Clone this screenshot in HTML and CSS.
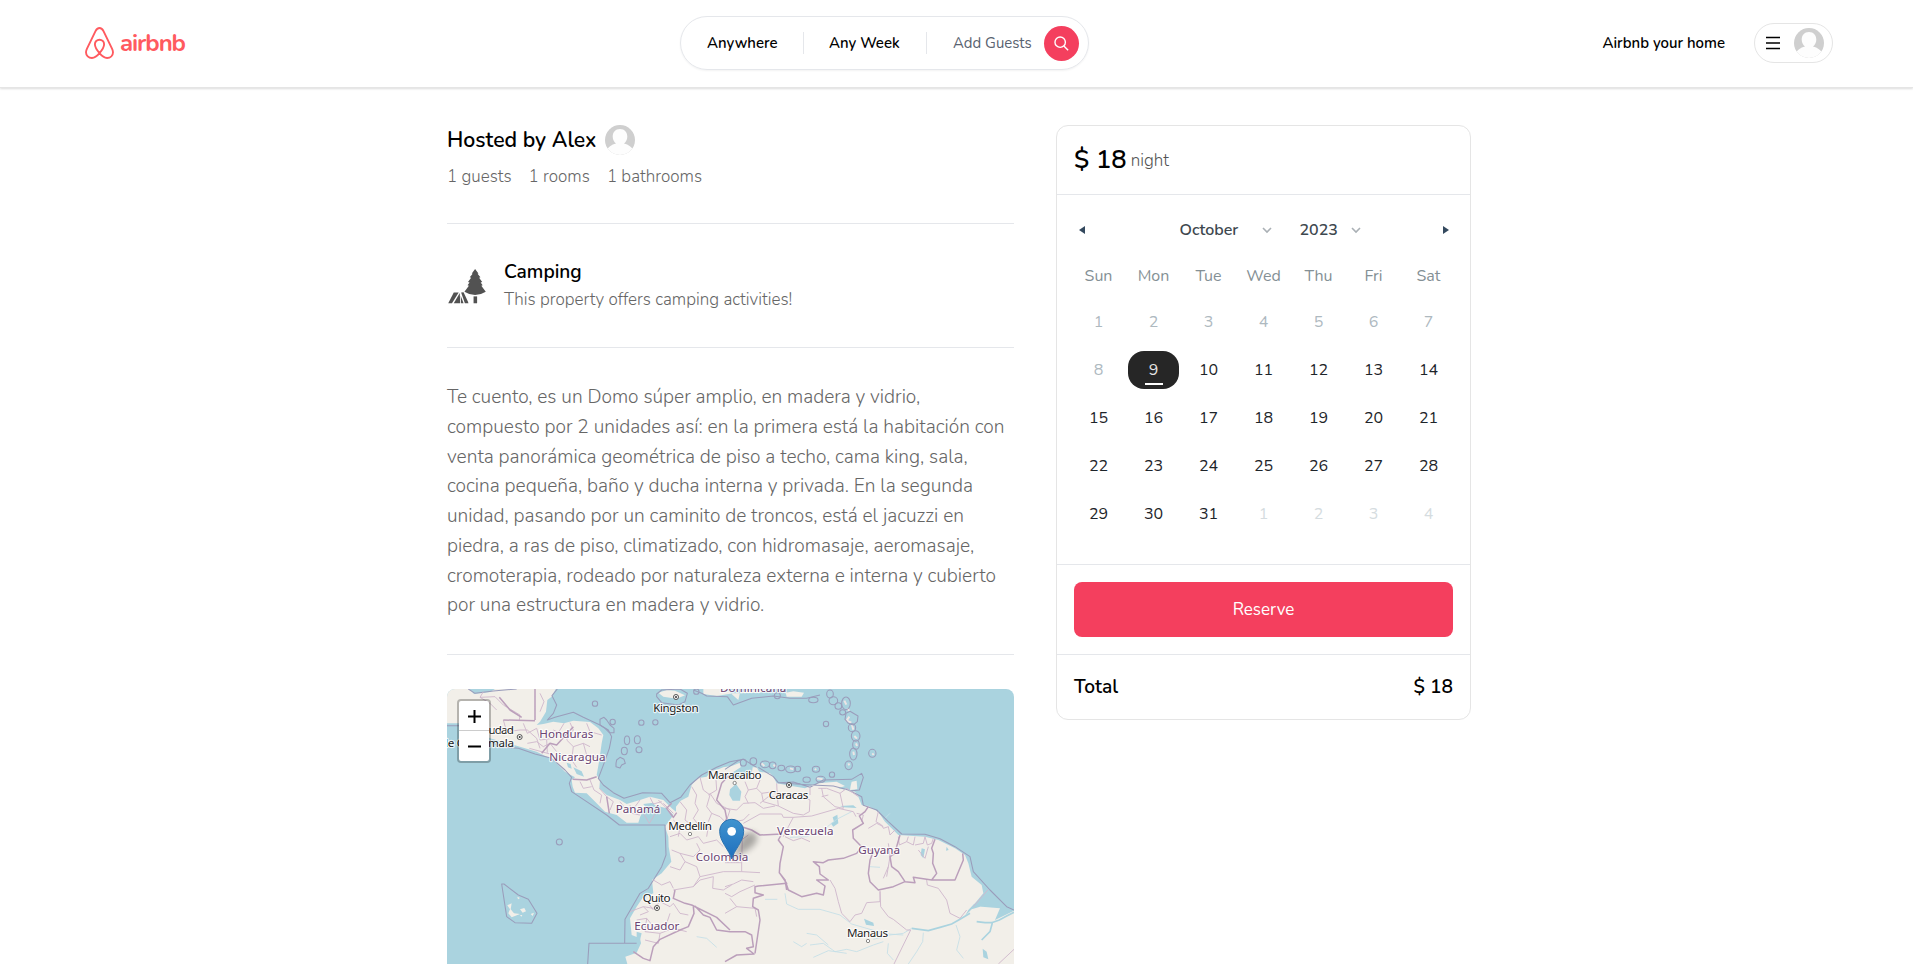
FILE: index.html
```html
<!DOCTYPE html>
<html lang="en">
<head>
<meta charset="utf-8">
<title>Airbnb</title>
<link rel="stylesheet" href="styles.css">
</head>
<body>
<svg class="defs" width="0" height="0">
  <symbol id="avatar" viewBox="0 0 30 30">
    <clipPath id="avatar-clip"><circle cx="15" cy="15" r="15"/></clipPath>
    <g clip-path="url(#avatar-clip)">
      <rect width="30" height="30" fill="#cfcfcf"/>
      <path d="M15 4C19.6 4 22.3 7.300 22.300 11.500C22.300 14.500 21 17 19 18.500C23.500 19.500 27 22 29 26V31H1V26C3 22 6.500 19.500 11 18.500C9 17 7.700 14.500 7.700 11.500C7.700 7.300 10.400 4 15 4Z" fill="#fdfdfd"/>
    </g>
  </symbol>
</svg>

<header class="header">
  <a class="logo">
    <svg class="logo-mark" viewBox="0 0 29 32" width="29" height="32"><path d="M14.500 26.200C11.500 22.700 9.900 19.900 9.900 17.300C9.900 14.500 11.900 12.700 14.500 12.700S19.100 14.500 19.100 17.300C19.100 19.900 17.500 22.700 14.500 26.200C12 29.300 9.600 31 6.900 31C3.600 31 1 28.600 1 25.300C1 24.100 1.300 23.100 2 21.700L10.500 4.100C11.500 2 12.700 1 14.500 1S17.500 2 18.500 4.100L27 21.700C27.700 23.100 28 24.100 28 25.300C28 28.600 25.400 31 22.100 31C19.400 31 17 29.300 14.500 26.200Z" fill="none" stroke="#ff5a5f" stroke-width="1.900"/></svg>
    <span class="logo-text">airbnb</span>
  </a>
  <div class="search">
    <div class="search-item">Anywhere</div>
    <div class="search-item search-week">Any Week</div>
    <div class="search-guests">
      <span>Add Guests</span>
      <span class="search-button"><svg viewBox="0 0 32 32" width="17" height="17"><circle cx="13.500" cy="13.500" r="9.800"/><path d="M20.500 20.500L28.500 28.500"/></svg></span>
    </div>
  </div>
  <div class="user">
    <span class="user-home">Airbnb your home</span>
    <div class="user-menu">
      <svg class="burger" viewBox="0 0 14 14" width="14" height="14"><path d="M0 1.500H14M0 7H14M0 12.500H14"/></svg>
      <svg class="avatar"><use href="#avatar"/></svg>
    </div>
  </div>
</header>

<main class="main">
  <section class="info">
    <div class="host"><span>Hosted by Alex</span><svg class="avatar"><use href="#avatar"/></svg></div>
    <div class="facts"><span>1 guests</span><span>1 rooms</span><span>1 bathrooms</span></div>
    <hr>
    <div class="category">
      <svg viewBox="0 0 180 165" width="40" height="37">
        <g fill="#525252"><path d="M122 4L137 24L133 25L146 41L140 43L154 62L147 64L156 77L150 79L170 106Q146 121 122 121Q98 121 74 106L94 79L88 77L97 64L90 62L104 43L98 41L111 25L107 24Z"/><path d="M115 127H131V158H115Z"/><path d="M26 110H48L18 158H1L4 152Z"/><path d="M53 112L55 158H26Z"/><path d="M59 110L70 108L90 151L92 158H76Z"/><path d="M57 124L70 158H59Z"/></g>
      </svg>
      <div><div class="category-title">Camping</div><div class="category-text">This property offers camping activities!</div></div>
    </div>
    <hr>
    <p class="description">Te cuento, es un Domo súper amplio, en madera y vidrio,<br>compuesto por 2 unidades así: en la primera está la habitación con<br>venta panorámica geométrica de piso a techo, cama king, sala,<br>cocina pequeña, baño y ducha interna y privada. En la segunda<br>unidad, pasando por un caminito de troncos, está el jacuzzi en<br>piedra, a ras de piso, climatizado, con hidromasaje, aeromasaje,<br>cromoterapia, rodeado por naturaleza externa e interna y cubierto<br>por una estructura en madera y vidrio.</p>
    <hr>
    <div class="map">
      <svg class="map-tiles" viewBox="21 27 1701 825" width="567" height="275">
        <defs>
          <linearGradient id="pin" x1="0" y1="0" x2="0" y2="1"><stop offset="0" stop-color="#3f93cf"/><stop offset="1" stop-color="#1f6fbd"/></linearGradient>
          <filter id="soft" x="-50%" y="-50%" width="200%" height="200%"><feGaussianBlur stdDeviation="9"/></filter>
        </defs>
        <rect x="21" y="27" width="1701" height="825" fill="#aad3df"/>
        <!-- mainland -->
        <path class="land" d="M21 27H88L102 42L150 36L165 27H347L335 50L322 60L318 95L300 125L290 135L310 132L340 125L372 130L400 122L450 126L475 145L490 165L485 190L478 240L470 285L480 300L478 325L500 345L540 360L560 372L600 360L630 350L670 360L695 385L708 395L708 380L722 362L745 350L755 315L772 295L800 290L815 272L835 268L850 262L875 258L900 248L902 262L880 276L868 284L875 300L900 296L915 285L935 282L938 262L950 262L958 275L990 280L1000 290L1010 310L1055 318L1095 325L1125 312L1150 308L1190 305L1215 318L1195 325L1245 335L1255 350L1265 375L1285 378L1315 395L1335 425L1375 465L1455 470L1495 480L1545 505L1575 525L1585 550L1595 590L1625 615L1630 640L1605 670L1625 680L1680 685L1665 720L1722 692V852H562L556 830L590 818L603 790L600 775L575 765L570 715L590 680L607 655L640 640L636 600L665 580L694 545L686 500L685 470L675 440L700 405L680 385L640 375L612 385L600 412L595 428L560 428L530 405L495 395L470 370L440 340L405 338L398 320L395 300L405 292L375 275L340 240L290 215L240 200L150 175L90 140L60 130H21Z"/>
        <!-- islands -->
        <path class="land" d="M655 38L680 30L705 32L735 46L710 56L670 50ZM790 27H860L878 45L895 60L900 38L930 30L985 27H990L960 38L880 40L830 48L790 42ZM1037 38L1060 34L1092 38L1085 50L1040 50ZM1232 318L1235 305L1250 302L1252 328L1230 330ZM202 676L215 670L212 688L222 700L240 702L215 712L205 700L210 688ZM240 688L253 684L258 694L248 698ZM232 650L240 654L234 658ZM272 702L282 698L278 708ZM240 705L247 705L244 710Z"/>
        <path class="speck" d="M1213 62l6 12M1222 85l6 8M1228 110l-8 12l14 6M1236 135l4 14M1243 168l8 8M1248 190l3 8M1240 215l2 10M1225 250l3 6M1297 220l4 5M965 250l8 8M1000 255l10 5M1050 265l10 3M1130 295l18 3M1125 266l3 4"/>
        <!-- lakes and rivers -->
        <path class="lake" d="M870 328L888 312L904 335L900 362L878 362L868 345ZM1178 412L1192 404L1195 430L1180 440L1172 430L1182 425ZM400 262L425 274L432 290L410 282ZM380 248L392 252L395 266L384 262ZM1272 716L1300 728L1302 738L1278 734ZM1445 505L1455 508L1450 535L1442 525ZM1520 500L1526 510L1518 512ZM1628 806L1640 815L1645 838L1630 832ZM1602 672L1585 690L1575 708L1595 688L1640 674L1615 664ZM590 755L605 760L600 780L590 778ZM610 372L640 368L655 395L640 382L618 384ZM1200 378L1240 376L1250 384L1210 382Z"/>
        <path class="river wide" d="M1722 697L1700 708L1678 720L1655 728L1635 728L1610 725M1590 700L1560 718L1535 732L1500 742L1465 752L1415 745M1658 725L1650 755L1625 780"/>
        <path class="river" d="M1450 758L1448 785L1430 815L1405 852M1548 735L1560 770L1550 810L1570 835M1415 745L1390 760L1350 765L1300 778M1035 640L1040 672L1075 688L1140 688L1200 705L1235 732L1290 748L1345 762L1390 765M975 658L1012 658M1110 795L1150 790L1185 815L1220 808L1250 815L1300 795L1330 785M1100 760L1130 765L1165 795M1060 785L1085 800L1100 790M1120 832L1165 812L1220 820M1345 790L1342 820L1360 840M1290 560L1320 562M1350 400L1330 420M770 770L800 775L830 802M1235 395L1190 418L1150 450L1100 470L1050 472"/>
        <!-- maritime limits -->
        <path class="sea" d="M21 137L60 137L110 165L180 200L235 205L285 222L335 235L375 270L395 292L388 310L395 335L440 365L500 405L538 435L675 435L678 525L665 560L625 625L600 640L555 718L554 790M443 852L447 790H590M85 27L105 40L160 33L230 27M352 27L336 47L350 75L340 100L322 120L345 112L400 97L430 112L480 135L505 150L515 170L508 205L492 250L475 295L490 315L520 338L552 355L608 338L665 340L690 368L722 352L750 315L785 285L830 262L870 245L910 238L950 262M855 268L895 242L910 238M955 262L1000 290L1015 308L1060 306L1110 322L1150 300L1235 298L1265 280L1270 292L1258 330L1228 333M1015 308L1100 314L1180 318L1225 330L1265 350L1270 376L1310 390L1345 425L1385 462L1455 463L1500 476L1545 500L1590 530L1600 575L1650 630L1700 680L1722 690M185 612L200 710L225 728L275 730L291 700L265 658L235 645L192 612ZM650 42L665 30L720 27L742 40L735 65L715 75L665 68L650 50ZM862 50L880 75L935 55L1000 48L1050 55L1100 55L1140 45M760 30L785 40L800 48L862 50"/>
        <g class="sea">
          <circle cx="465" cy="71" r="8"/><circle cx="518" cy="126" r="8"/><circle cx="604" cy="128" r="8"/><circle cx="646" cy="127" r="8"/><circle cx="358" cy="486" r="9"/><circle cx="544" cy="538" r="8"/><circle cx="769" cy="35" r="8"/><circle cx="1158" cy="132" r="8"/><circle cx="1012" cy="47" r="9"/>
          <ellipse cx="561" cy="181" rx="8" ry="13"/><ellipse cx="592" cy="179" rx="9" ry="12"/><ellipse cx="553" cy="213" rx="9" ry="11"/><ellipse cx="597" cy="209" rx="9" ry="9"/><path d="M530 240L540 232L552 238L556 250L545 255L540 264L528 260L528 250ZM480 118L492 112L500 120L510 135L522 145L522 158L508 158L495 145L480 135Z"/>
          <ellipse cx="1120" cy="60" rx="14" ry="8"/><ellipse cx="1170" cy="42" rx="10" ry="12"/><ellipse cx="1180" cy="62" rx="13" ry="12"/><ellipse cx="1195" cy="78" rx="10" ry="10"/><ellipse cx="1218" cy="70" rx="13" ry="19"/><ellipse cx="1208" cy="97" rx="9" ry="8"/><path d="M1218 100L1230 94L1254 108L1252 125L1240 135L1225 130L1215 118Z"/><ellipse cx="1236" cy="143" rx="11" ry="12"/><ellipse cx="1247" cy="168" rx="13" ry="16"/><ellipse cx="1248" cy="194" rx="10" ry="14"/><ellipse cx="1240" cy="222" rx="11" ry="18"/><ellipse cx="1226" cy="256" rx="11" ry="13"/><ellipse cx="1297" cy="220" rx="11" ry="12"/>
          <ellipse cx="940" cy="244" rx="10" ry="11"/><ellipse cx="910" cy="248" rx="9" ry="10"/><ellipse cx="975" cy="253" rx="14" ry="10"/><ellipse cx="998" cy="256" rx="10" ry="10"/><ellipse cx="1024" cy="264" rx="10" ry="8"/><ellipse cx="1052" cy="268" rx="15" ry="10"/><ellipse cx="1073" cy="267" rx="9" ry="8"/><ellipse cx="1128" cy="268" rx="11" ry="9"/><ellipse cx="1100" cy="299" rx="11" ry="8"/><ellipse cx="1176" cy="284" rx="8" ry="8"/><ellipse cx="1142" cy="298" rx="14" ry="9"/>
        </g>
        <!-- provinces -->
        <path class="province" d="M120 52L165 50L190 75L240 105L238 120M130 35L120 52L150 70L170 90M190 120L200 155L240 150L262 150L290 175M250 130L262 160L290 145L300 180L340 175L360 150L372 130M262 190L290 185L310 200L330 190L350 215M290 175L300 205M320 180L322 218M390 128L400 150L380 180L400 200L430 190L450 200M340 150L375 165L392 150M440 130L450 155L485 165M400 200L395 240L410 262M430 190L440 225L475 235M300 40L312 65L300 95M268 205L330 222M420 305L430 325L455 320M450 300L462 330L485 345L480 370M478 325L500 350L520 365L510 390M540 365L555 385L585 380L600 360M570 375L575 400L600 405M630 352L640 372L665 365M655 360L680 385L690 375M670 370L700 400M610 400L628 430L645 402"/>
        <path class="province" d="M755 320L770 345L765 370L775 390L760 415L780 440L790 425L805 440L800 470M780 292L790 330L810 345L800 380L815 400L805 425M805 345L830 330L828 300M720 365L740 390L735 420L760 440M690 470L720 460L740 480L775 470L790 490L830 480L850 500M700 420L720 440L715 470M695 510L720 520L735 545L720 570L690 560M720 520L760 530L780 510L770 490M735 545L770 560L780 590L760 620L700 630M760 620L780 600L820 590L818 625L850 630L875 615M640 600L665 615L690 605L700 625M780 590L850 575L905 575L905 548L855 548M810 340L830 370L870 390L860 420M815 400L840 410L860 430L850 470M905 575L960 578M905 548L907 470M855 500L890 490L925 465M855 620L880 612L905 600L940 605M855 640L875 650L900 635L945 615M870 655L890 680L855 700M890 680L945 685L950 710M570 695L610 680L625 695L600 705M610 680L640 685L660 665L690 680L700 670M590 720L620 715L640 740L680 730L690 700M620 715L615 755L660 760L655 790L615 780M660 760L700 745L740 755M640 655L625 670L640 690M700 670L720 700L745 705M855 385L890 390L910 370L945 368L970 385L1005 378M915 305L925 330L950 325L965 340L1000 335M950 325L960 300M965 340L970 365L1015 378M1000 335L1015 350L1060 340L1080 345L1110 360L1108 395L1090 405L1060 400L1015 378L1012 350M925 330L915 350L925 370M1110 322L1110 345M1010 310L1012 350M1135 325L1160 325L1200 340L1210 385L1185 380L1150 350L1145 325M1200 340L1220 325L1255 350M1145 350L1165 345M910 430L960 402L1025 402L1030 412L1060 412L1115 408L1195 385L1240 395L1248 410M855 430L910 420L928 402M960 370L985 350L1010 352M1060 412L1045 440L1030 470M1035 470L1060 482L1085 474L1110 485M1250 400L1270 405L1265 425M1285 445L1310 430L1330 440M1315 395L1308 425L1325 435L1330 445L1345 440L1350 465L1365 450M1375 470L1378 495L1400 485L1405 470M1400 485L1420 495L1425 470M1425 495L1450 490L1455 470L1462 495L1475 490L1480 475M1435 510L1455 535L1465 500M1170 600L1185 625L1195 665L1205 700L1230 725L1245 705L1265 700L1280 668L1320 665V635M1345 560L1330 595M1345 490L1350 530L1340 590M1320 632L1322 680L1345 710L1360 718L1400 750L1412 750L1362 852M1460 600L1462 615L1495 625L1520 660L1530 700L1560 715L1580 690M1645 628L1600 680M1675 852L1722 808"/>
        <!-- countries -->
        <path class="country" d="M285 27V120M178 52L210 90L245 112M190 120L285 122M695 370L680 385L700 412L710 398M500 350L508 400M470 290L440 300L398 298M400 140L350 195L330 190L305 220M705 630L700 655L735 670L755 675L830 712L870 750M760 680L762 700L745 740L720 750L660 778L640 800L630 842L610 835L580 815M765 678L790 705L810 712L830 750L870 755L915 755L935 765L940 800L920 805L942 822L890 825L855 845M868 285L845 310L830 360L855 390L860 415L855 430L905 440L935 450L960 465L1025 462L1015 480L1030 500L1020 550L1018 578L1035 600L1040 630M1018 578L1040 610L955 618L945 620L945 638L970 645L940 655L938 680L955 690L960 720L945 820M1035 600L1045 630L1085 650L1130 640L1150 645L1155 618L1130 600L1165 600L1140 582L1138 560L1120 545L1150 548L1165 540L1210 535L1250 520L1265 500L1240 475L1238 450L1270 430L1258 408L1275 395L1285 380M1265 500L1300 515L1290 540L1285 580L1290 605L1315 630L1360 620L1395 605M1380 465L1370 500L1365 520L1350 530L1355 560L1375 575L1395 605L1425 608L1420 592L1475 600L1490 580L1478 550L1480 520L1475 505L1485 478M1475 600L1545 600L1570 540L1568 520"/>
        <!-- labels -->
        <g class="place">
          <text x="640" y="95" textLength="136">Kingston</text><text x="119" y="162" textLength="103">Ciudad</text><text x="3" y="202" textLength="219">de Guatemala</text><text x="804" y="297" textLength="161">Maracaibo</text><text x="685" y="449" textLength="131">Medellín</text><text x="608" y="665" textLength="84">Quito</text><text x="986" y="357" textLength="119">Caracas</text><text x="1221" y="770" textLength="123">Manaus</text>
        </g>
        <g class="nation">
          <text x="298" y="175" textLength="162">Honduras</text><text x="328" y="244" textLength="169">Nicaragua</text><text x="527" y="399" textLength="134">Panamá</text><text x="767" y="543" textLength="158">Colombia</text><text x="583" y="749" textLength="135">Ecuador</text><text x="1011" y="465" textLength="170">Venezuela</text><text x="1255" y="522" textLength="125">Guyana</text><text x="840" y="36" textLength="199">Dominicana</text>
        </g>
        <g class="capital"><circle cx="708" cy="51" r="7.500"/><circle cx="239" cy="171" r="7.500"/><circle cx="651" cy="684" r="7.500"/><circle cx="1047" cy="315" r="7.500"/></g>
        <g class="dot"><circle cx="708" cy="51" r="3"/><circle cx="239" cy="171" r="3"/><circle cx="651" cy="684" r="3"/><circle cx="1047" cy="315" r="3"/></g>
        <g class="city"><circle cx="750" cy="462" r="5"/><circle cx="884" cy="309" r="5"/><circle cx="1284" cy="783" r="5"/></g>
        <path d="M878 535L905 470Q935 445 950 465Q958 490 920 512Z" fill="#000" opacity=".3" filter="url(#soft)"/>
        <path d="M875 537C868 510 839 485 839 454C839 434 855 418 875 418S911 434 911 454C911 485 882 510 875 537Z" fill="url(#pin)" stroke="#2b73b0" stroke-width="3"/>
        <circle cx="875" cy="454" r="13" fill="#fff"/>
      </svg>
      <div class="zoom"><svg viewBox="0 0 30 60" width="30" height="60"><path d="M9 15.500H22M15.500 9V22M9 45.500H22" fill="none" stroke="#000" stroke-width="2"/><path d="M0 29.500H30" stroke="#ccc"/></svg></div>
    </div>
  </section>

  <aside class="card">
    <div class="price"><span class="price-value">$ 18</span><span class="price-unit">night</span></div>
    <div class="calendar">
      <div class="calendar-nav">
        <i class="arrow prev"></i>
        <div class="pickers">
          <span class="picker month">October<svg viewBox="0 0 10 7" width="10" height="7"><path d="M1 1L5 5L9 1"/></svg></span>
          <span class="picker year">2023<svg viewBox="0 0 10 7" width="10" height="7"><path d="M1 1L5 5L9 1"/></svg></span>
        </div>
        <i class="arrow next"></i>
      </div>
      <div class="weekdays"><span>Sun</span><span>Mon</span><span>Tue</span><span>Wed</span><span>Thu</span><span>Fri</span><span>Sat</span></div>
      <div class="days">
        <span class="past">1</span><span class="past">2</span><span class="past">3</span><span class="past">4</span><span class="past">5</span><span class="past">6</span><span class="past">7</span>
        <span class="past">8</span><span class="today"><b>9</b></span><span>10</span><span>11</span><span>12</span><span>13</span><span>14</span>
        <span>15</span><span>16</span><span>17</span><span>18</span><span>19</span><span>20</span><span>21</span>
        <span>22</span><span>23</span><span>24</span><span>25</span><span>26</span><span>27</span><span>28</span>
        <span>29</span><span>30</span><span>31</span><span class="outside">1</span><span class="outside">2</span><span class="outside">3</span><span class="outside">4</span>
      </div>
    </div>
    <div class="action"><button class="reserve">Reserve</button></div>
    <div class="total"><span>Total</span><span>$ 18</span></div>
  </aside>
</main>
</body>
</html>
```
FILE: styles.css
```css
* { box-sizing: border-box; }
html { font-size: 17px; }
body { margin: 0; height: 964px; overflow: hidden; background: #fff; color: #000; font-family: Nunito, Lato, "Open Sans", sans-serif; line-height: 1.5; }
.defs { position: absolute; }
svg { display: block; flex: none; }
hr { width: 100%; height: 1px; margin: 0; border: 0; background: #e5e7eb; }
.avatar { width: 30px; height: 30px; }

.header { display: grid; grid-template-columns: 595px 409px 1fr; align-items: center; height: 88px; padding: 0 80px 1px 85px; border-bottom: 1px solid #e5e5e5; box-shadow: 0 1px 2px rgba(0,0,0,.14); font-size: 14.95px; font-weight: 600; }
.logo { display: flex; align-items: center; gap: 6px; }
.logo-text { font-size: 24px; font-weight: 700; line-height: 30px; letter-spacing: -1.1px; color: #ff5a5f; padding-bottom: 1px; }
.search { display: flex; align-items: center; height: 54px; padding-left: 1px; border: 1px solid #e5e7eb; border-radius: 27px; box-shadow: 0 1px 2px rgba(0,0,0,.05); white-space: nowrap; }
.search-item { width: 121px; padding-left: 25px; line-height: 22px; }
.search-week { border: solid #e5e7eb; border-width: 0 1px; width: 124px; }
.search-guests { display: flex; flex: 1; align-items: center; justify-content: space-between; padding: 0 9px 0 26px; font-weight: 400; color: #596270; }
.search-button { display: grid; place-items: center; width: 35px; height: 35px; border-radius: 50%; background: #f43f5e; }
.search-button svg { fill: none; stroke: #fff; stroke-width: 2.6; }
.user { display: flex; align-items: center; justify-content: flex-end; gap: 29px; }
.user-menu { display: flex; align-items: center; gap: 14px; height: 40px; width: 79px; padding-left: 11px; border: 1px solid #e5e5e5; border-radius: 20px; }
.burger { stroke: #000; stroke-width: 1.3; }

.main { display: grid; grid-template-columns: 567px 415px; column-gap: 42px; align-items: start; padding: 37px 0 0 447px; }
.host { display: flex; align-items: center; gap: 9px; height: 30px; font-size: 21.25px; font-weight: 600; }
.host span { padding-top: 2px; }
.facts { display: flex; gap: 17px; height: 68px; padding-top: 9px; font-weight: 300; color: #666; line-height: 26px; }
.category { display: flex; align-items: center; gap: 16px; height: 123px; padding-left: 1px; }
.category svg { margin-top: 2px; }
.category-title { font-size: 19.125px; font-weight: 600; line-height: 28px; }
.category-text { padding-top: 1px; font-weight: 300; line-height: 26px; color: #666; }
.description { margin: 0; height: 306px; padding-top: 35px; font-size: 19.14px; font-weight: 300; line-height: 29.75px; color: #666; white-space: nowrap; }
.map { position: relative; height: 275px; margin-top: 34px; overflow: hidden; border-radius: 8px 8px 0 0; }
.land { fill: #f2efe9; }
.lake { fill: #aad3df; }
.speck { fill: none; stroke: #eee5e5; stroke-width: 6; }
.river { fill: none; stroke: #c3dfe7; stroke-width: 2.5; }
.river.wide { stroke: #aad3df; stroke-width: 5; }
.sea { fill: none; stroke: #9a9dbb; stroke-width: 3.2; stroke-linejoin: round; }
.province { fill: none; stroke: #d0b8cc; stroke-width: 2.8; stroke-linejoin: round; }
.country { fill: none; stroke: #bb9fbb; stroke-width: 4.5; stroke-linejoin: round; }
.place, .nation { font-family: "Noto Sans", sans-serif; font-size: 35px; paint-order: stroke; stroke: #fff; stroke-opacity: .75; stroke-width: 7; stroke-linejoin: round; }
.place { fill: #222; }
.nation { fill: #6b4473; }
.capital { fill: #fff; stroke: #333; stroke-width: 2.5; }
.dot { fill: #333; }
.city { fill: #fff; stroke: #555; stroke-width: 2; }
.zoom { position: absolute; left: 10px; top: 10px; border: 2px solid rgba(0,0,0,.25); border-radius: 4px; background: #fff; background-clip: padding-box; }

.card { border: 1px solid #e5e5e5; border-radius: 12px; overflow: hidden; height: 595px; }
.price { display: flex; align-items: center; gap: 4px; height: 68px; padding: 1px 17px 0; }
.price-value { font-size: 25.5px; font-weight: 600; }
.price-unit { padding-top: 1px; font-weight: 300; color: #525252; }
.calendar { height: 371px; padding: 0 14px; border: solid #e5e7eb; border-width: 1px 0; font-size: 16px; }
.calendar-nav { display: flex; align-items: center; justify-content: space-between; height: 70px; padding: 0 7px 0 8px; }
.arrow { width: 6px; border: solid transparent; border-width: 4px 6px 4px 0; border-right-color: #34495e; }
.arrow.next { border-width: 4px 0 4px 6px; border-left-color: #34495e; }
.pickers { display: flex; gap: 28px; margin-left: 12px; font-weight: 600; color: #3e484f; }
.picker { display: flex; align-items: center; justify-content: space-between; }
.picker svg { fill: none; stroke: #aab0b5; stroke-width: 1.6; }
.month { width: 92px; }
.year { width: 61px; }
.weekdays, .days { display: grid; grid-template-columns: repeat(7, 1fr); text-align: center; }
.weekdays { line-height: 22px; color: #849095; }
.days { grid-auto-rows: 48px; line-height: 48px; margin-top: 11px; color: #1d2429; }
.past { color: #aeb9bf; }
.outside { color: #d5dce0; }
.today { display: grid; place-items: center; }
.today b { display: flex; flex-direction: column; align-items: center; width: 51px; height: 38px; border-radius: 16px; background: #262626; color: #e5e5e5; font-weight: 400; line-height: 38px; }
.today b::after { content: ""; width: 18px; height: 2px; margin-top: -6px; background: #fff; }
.action { height: 89px; padding: 17px; }
.reserve { display: block; width: 100%; height: 55px; border: 0; border-radius: 8px; background: #f43f5e; color: #fff; font: 400 17px/26px Nunito, Lato, sans-serif; }
.total { display: flex; align-items: center; justify-content: space-between; height: 65px; padding: 0 17px; border-top: 1px solid #e5e7eb; font-size: 19.125px; font-weight: 600; }
```
